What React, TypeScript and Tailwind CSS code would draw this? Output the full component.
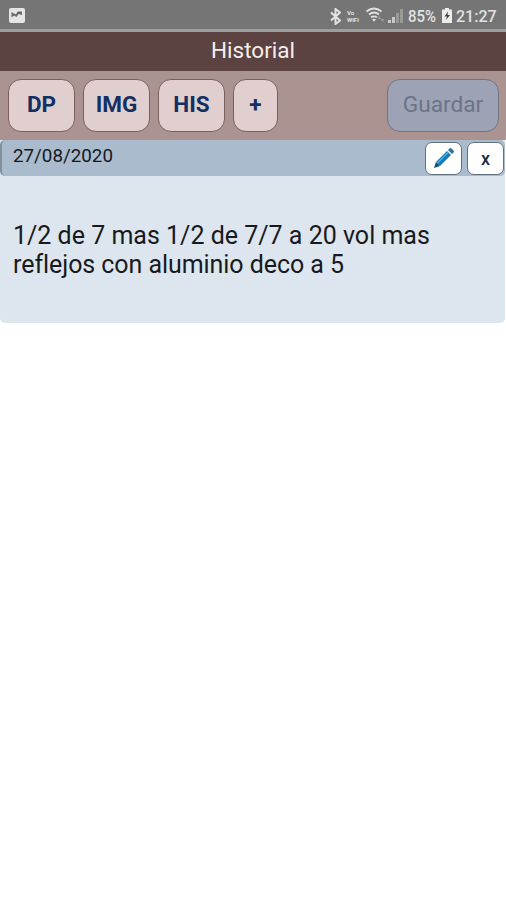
const StatusBar = () => {
  return (
    <div className="flex h-8 items-start justify-between border-b-[3px] border-[#a09e9c] bg-[#757575] pr-[9px] pl-[9px]">
      <svg className="mt-2" width="16" height="15" viewBox="0 0 16 15">
        <rect width="16" height="15" rx="2" fill="#e4e4e4" />
        <path d="M2.5 9.5V4L5 5.5 7 6.5l1.5-3H13V7L9.5 6 7.5 9 5 7.5z" fill="#686868" />
      </svg>
      <div className="flex h-full items-center text-[#e2e2e2]">
        <svg className="mt-[3px]" width="11" height="17" viewBox="0 0 11 17">
          <path
            d="M1 4.5l9 8L5.5 16V1L10 4.5l-9 8"
            fill="none"
            stroke="currentColor"
            strokeWidth="2"
          />
        </svg>
        <div className="mt-[3px] ml-[6px] w-[16px] text-[6px] leading-[7px] font-bold">
          <p>Vo</p>
          <p>WiFi</p>
        </div>
        <svg className="mt-[1px] ml-[3px]" width="19" height="16" viewBox="0 0 19 16">
          <g fill="none" stroke="currentColor" strokeWidth="1.7">
            <path d="M0.5 4.5Q8-1.5 15.5 4.5" />
            <path d="M3 7.5q5-4 10 0" />
            <path d="M5 10.3q3-2 6 0" />
          </g>
          <path d="M6 12.3q2-1.3 4 0l-2 2.4z" fill="currentColor" />
          <path d="M12 12l1.5-3L15 12zM15 12h3l-1.5 3z" fill="#a2a2a2" />
        </svg>
        <svg className="mt-[2px] ml-[3px]" width="15" height="15" viewBox="0 0 15 15">
          <path d="M0 12h3v3H0zM4 9h3v6H4z" fill="#c8c8c8" />
          <path d="M8 5h3v10H8zM12 1h3v14h-3z" fill="#999" />
        </svg>
        <span className="mt-[3px] ml-[5px] w-[31px] origin-left scale-x-[0.88] text-[17px] leading-none font-medium whitespace-nowrap">
          85%
        </span>
        <svg className="mt-[2px] ml-[3px]" width="10" height="15" viewBox="0 0 10 15">
          <path d="M3 0h4v1.5h3V15H0V1.5h3z" fill="#ececec" />
          <path d="M6 3.5L2.5 8.5H5L4 12l4-5H5.5z" fill="#404040" />
        </svg>
        <span className="mt-[3px] ml-[4px] w-[41px] origin-left scale-x-[0.94] text-[17px] leading-none font-medium whitespace-nowrap">
          21:27
        </span>
      </div>
    </div>
  );
};

const App = () => {
  const buttonClass =
    "flex h-[53px] items-center justify-center rounded-[13px] border border-[#79605f] bg-[#e1cfcf] pb-[2px] text-[22.5px] font-bold text-[#123063]";
  const smallButtonClass =
    "flex h-[33px] w-[37px] items-center justify-center rounded-[7px] border border-[#63717c] bg-white";
  return (
    <div className="min-h-screen overflow-hidden bg-white font-['Roboto',sans-serif]">
      <StatusBar />
      <h1 className="h-[39px] bg-[#5c4241] text-center text-[22.5px] leading-[37px] text-[#f5eeec]">
        Historial
      </h1>
      <div className="flex h-[69px] gap-[8px] bg-[#ab9392] pt-[8px] pr-[7px] pl-[8px]">
        <button className={`${buttonClass} w-[67px]`}>DP</button>
        <button className={`${buttonClass} w-[67px]`}>IMG</button>
        <button className={`${buttonClass} w-[67px]`}>HIS</button>
        <button className={`${buttonClass} w-[45px]`}>+</button>
        <button className="ml-auto flex h-[53px] w-[112px] items-center justify-center rounded-[13px] border border-[#6f7580] bg-[#9ea2b5] text-[22.7px] text-[#6c7487]">
          Guardar
        </button>
      </div>
      <div className="mr-px h-[183px] rounded-b-[5px] bg-[#dde5ee]">
        <div className="flex h-[36px] items-center rounded-[5px] border-l-2 border-[#81909b] bg-[#a9bbcc] pr-px pl-[11px]">
          <span className="mb-[4px] text-[18.8px] leading-[26px] text-[#15191e]">27/08/2020</span>
          <button className={`${smallButtonClass} ml-auto`}>
            <svg width="20" height="20" viewBox="0 0 20 20">
              <path d="M0 20l2-6 4 4z" fill="#174b6c" />
              <path d="M2 14L13 3l4 4L6 18z" fill="#1976b8" />
              <path d="M3.5 15L14 4.5" stroke="#45b5e4" strokeWidth="1.5" />
              <path d="M14 2l1.5-1.5q1-1 2 0l2 2q1 1 0 2L18 6z" fill="#28759c" />
            </svg>
          </button>
          <button className={`${smallButtonClass} ml-[5px] text-[18px] font-medium text-[#1d2f42]`}>
            x
          </button>
        </div>
        <p className="pt-[45px] pl-[13px] text-[25px] leading-[29px] text-[#171a20]">
          1/2 de 7 mas 1/2 de 7/7 a 20 vol mas
          <br />
          <span className="tracking-[-0.06px]">reflejos con aluminio deco a 5</span>
        </p>
      </div>
    </div>
  );
};

export default App;
